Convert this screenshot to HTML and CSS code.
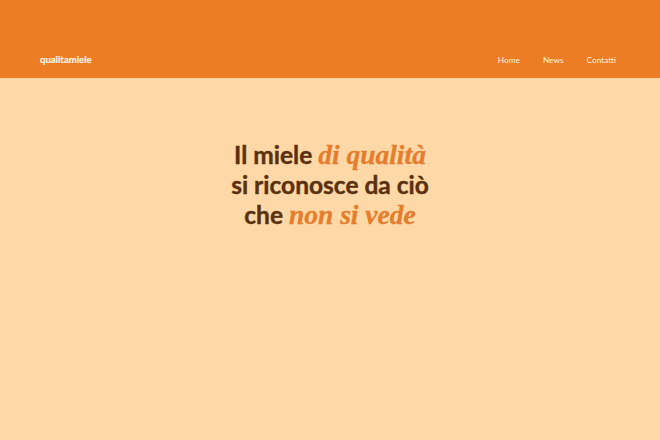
FILE: index.html
```html
<!DOCTYPE html>
<html lang="it">
<head>
<meta charset="utf-8">
<title>qualitamiele</title>
<link rel="stylesheet" href="styles.css">
</head>
<body>
<header class="topbar">
  <div class="brand">qualitamiele</div>
  <nav class="nav">
    <a href="#">Home</a>
    <a href="#">News</a>
    <a href="#">Contatti</a>
  </nav>
</header>
<main class="hero">
  <h1 class="title">Il miele <em>di qualità</em><br>si riconosce da ciò<br>che <em>non si vede</em></h1>
</main>
</body>
</html>
```
FILE: styles.css
```css
* { box-sizing: border-box; }
html, body { margin: 0; padding: 0; }
body {
  background: #fed8a6;
  font-family: Lato, "Noto Sans", sans-serif;
  width: 660px;
  height: 440px;
  overflow: hidden;
}
.topbar {
  background: #ec7d24;
  height: 78px;
  display: flex;
  align-items: flex-end;
  justify-content: space-between;
  padding: 0 44px 12px 40px;
}
.brand {
  color: #fff6e8;
  font-weight: 700;
  font-size: 9.5px;
  line-height: 12px;
  -webkit-text-stroke: 0.2px #fff6e8;
}
.nav {
  display: flex;
  gap: 23px;
}
.nav a {
  color: #fff1dc;
  text-decoration: none;
  font-size: 8.3px;
  line-height: 12px;
}
.hero {
  display: flex;
  justify-content: center;
  padding-top: 62px;
}
.title {
  margin: 0;
  text-align: center;
  color: #5a3110;
  font-weight: 700;
  font-size: 24.5px;
  line-height: 30px;
  -webkit-text-stroke: 0.4px #5a3110;
}
.title em {
  color: #e47d2c;
  -webkit-text-stroke: 0.3px #e47d2c;
  font-family: "Liberation Serif", "DejaVu Serif", serif;
  font-style: italic;
  font-weight: 700;
  font-size: 27.5px;
}
```
